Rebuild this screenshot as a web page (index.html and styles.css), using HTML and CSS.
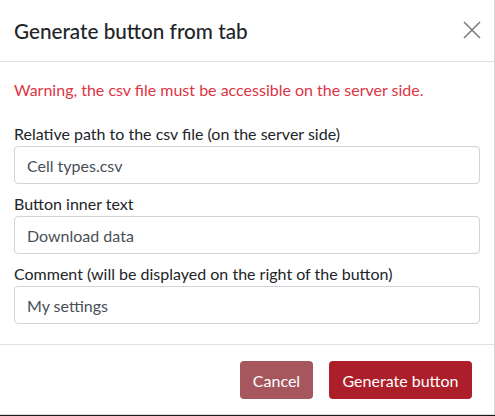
FILE: index.html
```html
<!DOCTYPE html>
<html>
<head>
<meta charset="utf-8">
<link rel="stylesheet" href="styles.css">
</head>
<body>
<div class="modal">
  <div class="modal-header">
    <h5 class="modal-title">Generate button from tab</h5>
    <button class="close" type="button" aria-label="Close">
      <svg width="18" height="18" viewBox="0 0 18 18"><path d="M1 1 L17 17 M17 1 L1 17" stroke="#7b7b7b" stroke-width="1.6" fill="none"/></svg>
    </button>
  </div>
  <div class="modal-body">
    <p class="warning">Warning, the csv file must be accessible on the server side.</p>
    <div class="form-group">
      <label class="label">Relative path to the csv file (on the server side)</label>
      <input class="input" type="text" value="Cell types.csv">
    </div>
    <div class="form-group">
      <label class="label">Button inner text</label>
      <input class="input" type="text" value="Download data">
    </div>
    <div class="form-group">
      <label class="label">Comment (will be displayed on the right of the button)</label>
      <input class="input" type="text" value="My settings">
    </div>
  </div>
  <div class="modal-footer">
    <button class="btn btn-cancel" type="button">Cancel</button>
    <button class="btn btn-primary" type="button">Generate button</button>
  </div>
</div>
</body>
</html>
```
FILE: styles.css
```css
html, body {
  margin: 0;
  padding: 0;
  background: #1b1b1b;
}
body {
  width: 495px;
  height: 416px;
  overflow: hidden;
  font-family: "Lato", "Open Sans", sans-serif;
  color: #212529;
}
.modal {
  box-sizing: border-box;
  width: 495px;
  height: 415px;
  background: #fff;
  border-right: 1px solid #d8d8d8;
  border-bottom: 1px solid #d8d8d8;
  display: flex;
  flex-direction: column;
}
.modal-header {
  box-sizing: border-box;
  height: 62px;
  border-bottom: 1px solid #dee2e6;
  display: flex;
  align-items: center;
  justify-content: space-between;
  padding: 0 13px 0 14px;
}
.modal-title {
  margin: 0;
  font-size: 20.7px;
  font-weight: 500;
  line-height: 30px;
  color: #212529;
}
.close {
  background: none;
  border: 0;
  padding: 0;
  width: 18px;
  height: 18px;
  display: flex;
  margin-top: -2px;
}
.modal-body {
  padding: 16px 14px 20px 14px;
}
.warning {
  margin: 0 0 20px 0;
  font-size: 16px;
  line-height: 24px;
  color: #dc3545;
}
.form-group {
  display: flex;
  flex-direction: column;
}
.form-group + .form-group {
  margin-top: 8px;
}
.label {
  font-size: 16px;
  line-height: 24px;
  color: #212529;
}
.input {
  box-sizing: border-box;
  height: 38px;
  width: 100%;
  border: 1px solid #ced4da;
  border-radius: 4px;
  padding: 0 12px;
  font-family: inherit;
  font-size: 16px;
  color: #495057;
  background: #fff;
  outline: none;
}
.modal-footer {
  flex: 1;
  border-top: 1px solid #dee2e6;
  display: flex;
  justify-content: flex-end;
  align-items: flex-start;
  gap: 16px;
  padding: 16px 22px 0 0;
}
.btn {
  box-sizing: border-box;
  height: 38px;
  padding: 0 12px;
  border: 0;
  border-radius: 4px;
  font-family: inherit;
  font-size: 16px;
  color: #fff;
}
.btn-cancel {
  background: #a6575e;
  width: 73px;
}
.btn-primary {
  background: #ac1e29;
  width: 143px;
}
```
